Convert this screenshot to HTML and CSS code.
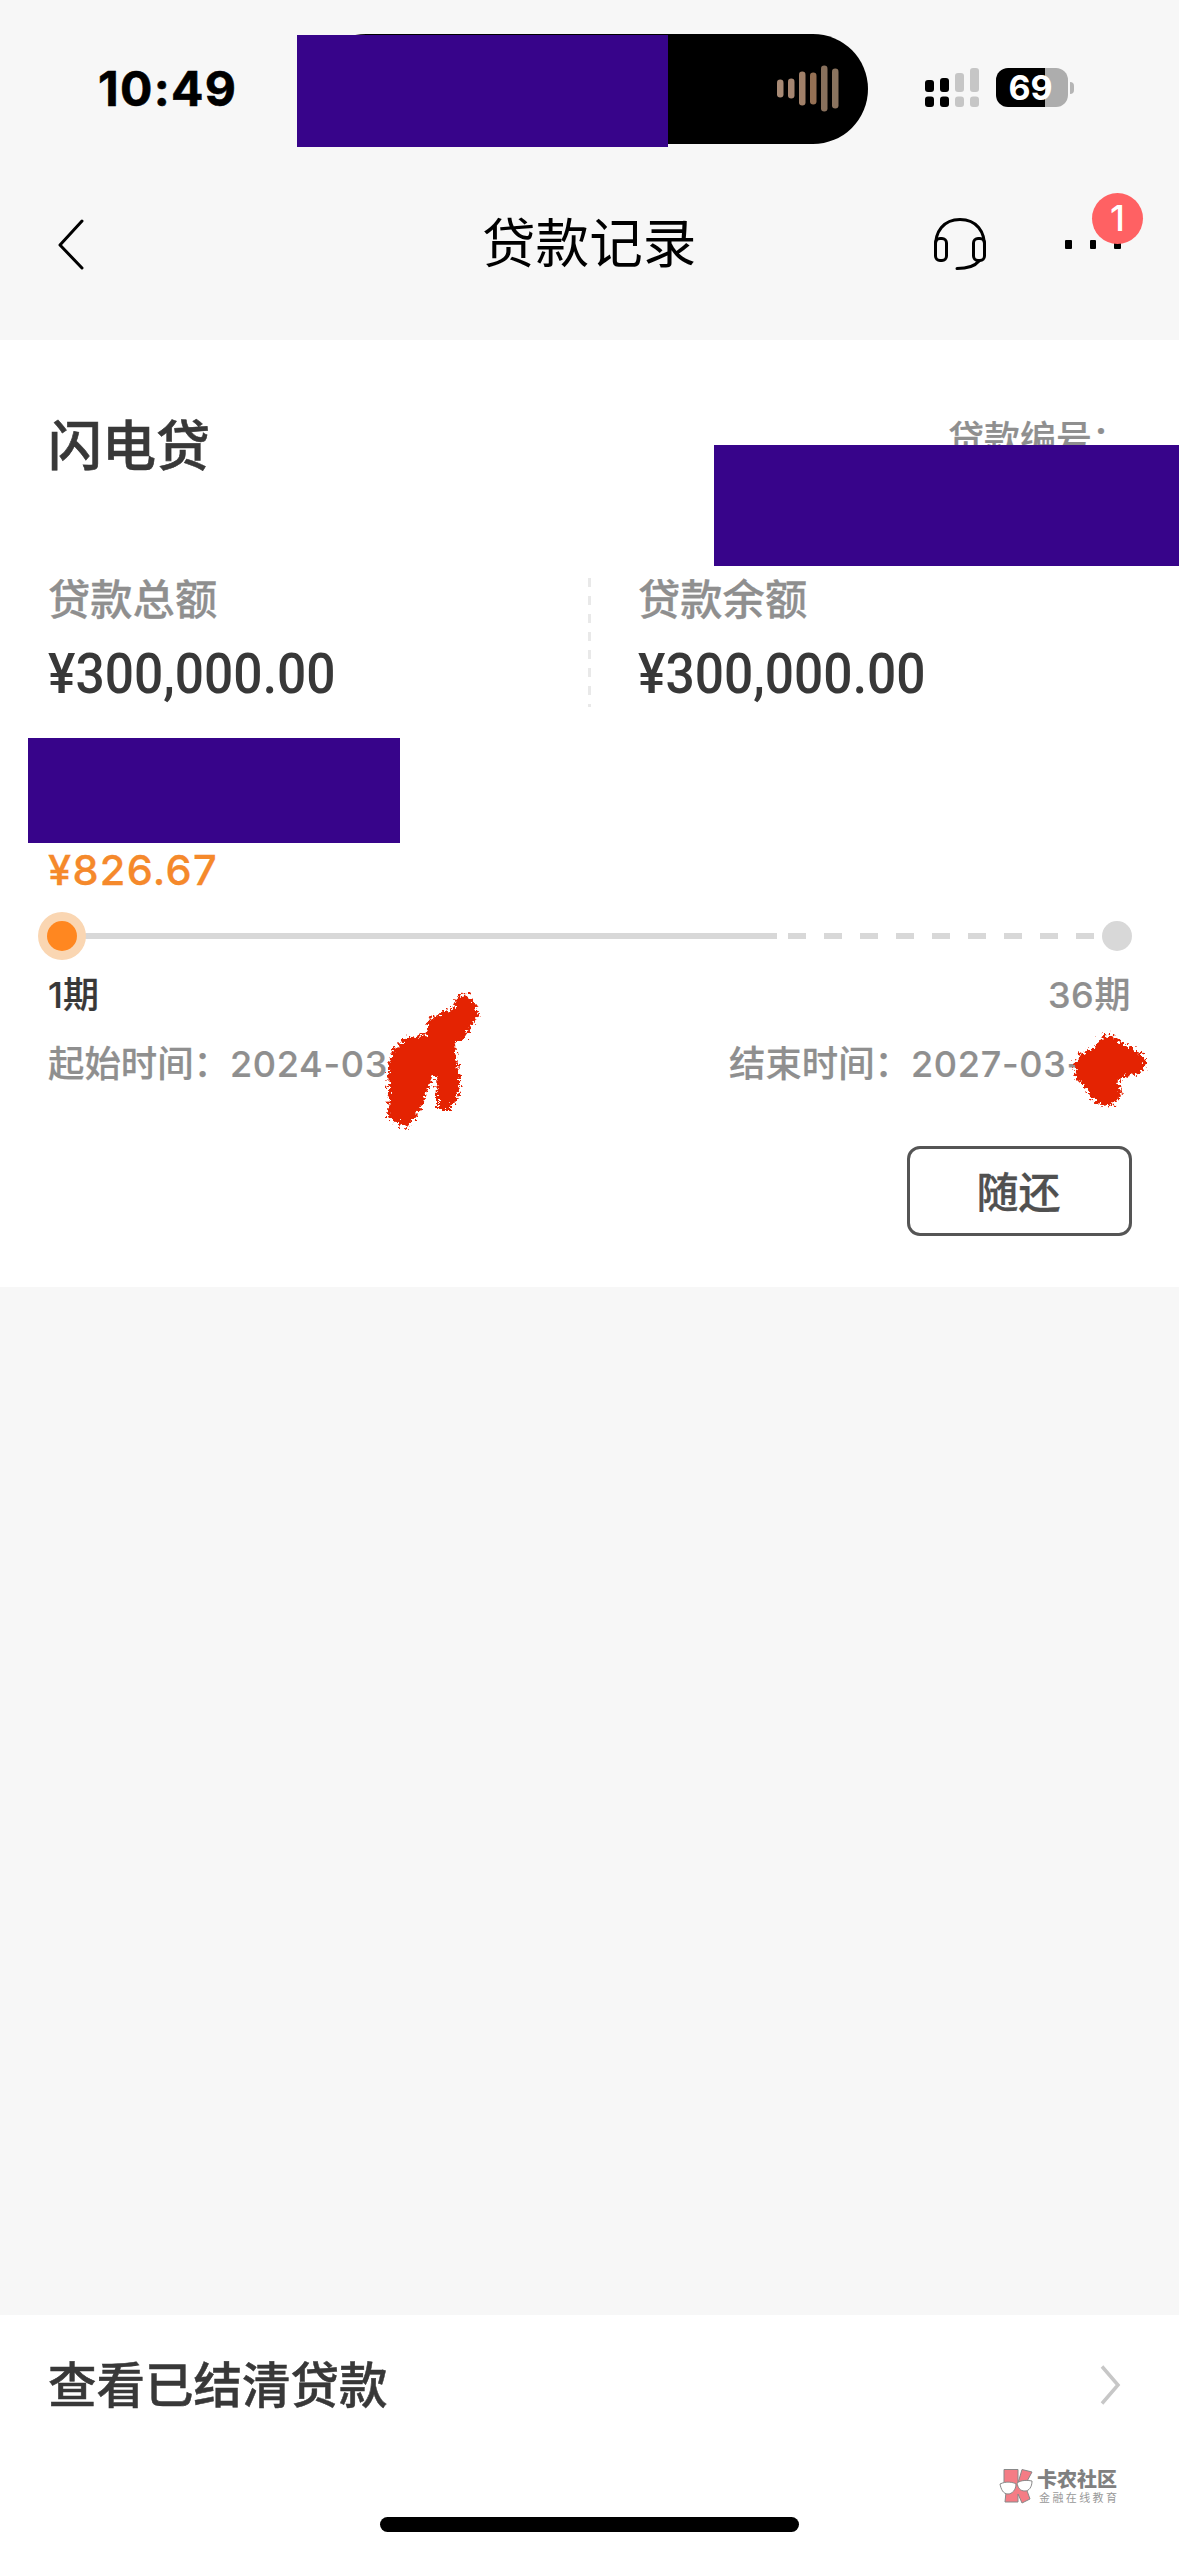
FILE: index.html
```html
<!DOCTYPE html>
<html lang="zh-CN">
<head>
<meta charset="utf-8">
<title>贷款记录</title>
<link rel="stylesheet" href="styles.css">
</head>
<body>
<div class="screen">
  <header class="top">
    <div class="status">
      <span class="clock">10:49</span>
      <div class="island">
        <svg class="wave" width="64" height="48" viewBox="0 0 64 48">
          <rect x="0" y="14.5" width="6.5" height="18" rx="3.2" fill="#a88a75"/>
          <rect x="11" y="13.5" width="6.5" height="20" rx="3.2" fill="#a58570"/>
          <rect x="22" y="6.5" width="6.5" height="34" rx="3.2" fill="#a08069"/>
          <rect x="33" y="7.5" width="6.5" height="32" rx="3.2" fill="#957054"/>
          <rect x="44" y="0.5" width="6.5" height="46" rx="3.2" fill="#88705c"/>
          <rect x="55" y="3.5" width="6.5" height="40" rx="3.2" fill="#8a735e"/>
        </svg>
        <span class="mask mask-island"></span>
      </div>
      <svg class="signal" width="54" height="39" viewBox="0 0 54 39">
        <g fill="#000"><rect y="12" width="9" height="12" rx="3"/><rect x="15" y="10" width="9" height="14" rx="3"/><rect y="28.5" width="9" height="10.5" rx="3"/><rect x="15" y="28.5" width="9" height="10.5" rx="3"/></g>
        <g fill="#c6c6c6"><rect x="30" y="5" width="9" height="19" rx="3"/><rect x="45" width="9" height="24" rx="3"/><rect x="30" y="28.5" width="9" height="10.5" rx="3"/><rect x="45" y="28.5" width="9" height="10.5" rx="3"/></g>
      </svg>
      <div class="battery">69</div>
      <span class="battery-tip"></span>
    </div>
    <nav class="nav">
      <svg class="back" width="30" height="54" viewBox="0 0 30 54"><path d="M27 4 5 28 27 51" fill="none" stroke="#000" stroke-width="3" stroke-linecap="round" stroke-linejoin="round"/></svg>
      <h1 class="title">贷款记录</h1>
      <svg class="headset" width="54" height="54" viewBox="0 0 54 54"><g fill="none" stroke="#000" stroke-width="3" stroke-linecap="round"><path d="M2.500 32C1.500 14 11 2.500 27 2.500S52.500 14 51.500 32"/><rect x="2.500" y="21.500" width="11" height="22" rx="4.500"/><rect x="40.500" y="21.500" width="11" height="22" rx="4.500"/><path d="M46 44C42 49 36 51.500 24 51.500"/></g></svg>
      <div class="more">
        <i></i><i></i><i></i>
        <span class="badge">1</span>
      </div>
    </nav>
  </header>

  <main class="card">
    <div class="card-head">
      <h2 class="product">闪电贷</h2>
      <div class="number">贷款编号：<span class="mask mask-number"></span></div>
    </div>
    <div class="amounts">
      <div class="amount"><span class="label">贷款总额</span><span class="value">¥300,000.00</span></div>
      <div class="divider"></div>
      <div class="amount"><span class="label">贷款余额</span><span class="value">¥300,000.00</span></div>
    </div>
    <div class="mask mask-due"></div>
    <div class="due">¥826.67</div>
    <div class="track">
      <span class="dot dot-now"></span>
      <span class="line"></span>
      <span class="dashes"></span>
      <span class="dot dot-end"></span>
    </div>
    <div class="row terms"><span class="term-now">1期</span><span class="term-end">36期</span></div>
    <div class="row dates">
      <div class="date">起始时间：<span class="num">2024-03</span>
        <svg class="scribble scribble-start" width="110" height="150" viewBox="0 0 110 150">
          <defs><filter id="rough" x="-20%" y="-20%" width="140%" height="140%" color-interpolation-filters="sRGB"><feTurbulence type="fractalNoise" baseFrequency=".3" numOctaves="3" seed="4"/><feDisplacementMap in="SourceGraphic" scale="13" xChannelSelector="R" yChannelSelector="G"/><feGaussianBlur stdDeviation=".7"/></filter></defs>
          <path filter="url(#rough)" fill="#e42302" d="M82 13C88 6 94 10 99 18 106 26 103 36 95 42L91 52C86 56 80 54 80 59L84 86C87 102 84 114 75 124L62 124 62 112 61 90 57 94 52 108 41 132 32 142 21 138 13 132 14 106 13 86C13 72 19 60 32 53L51 49 53 36 66 28 76 25Z"/>
        </svg>
      </div>
      <div class="date date-end">结束时间：<span class="num">2027-03-</span>
        <svg class="scribble scribble-end" width="100" height="90" viewBox="0 0 100 90">
          <path filter="url(#rough)" fill="#e42302" d="M40 14 50 8 61 17 75 24 86 34 84 46 72 50 61 53 58 61 62 69 54 79 43 81 32 74 25 62 16 53 14 41 19 29 34 23Z"/>
        </svg>
      </div>
    </div>
    <div class="actions"><button class="repay">随还</button></div>
  </main>

  <footer class="footer">
    <div class="settled"><span>查看已结清贷款</span>
      <svg width="24" height="46" viewBox="0 0 24 46"><path d="M4 4.500 20 23 4 41.500" fill="none" stroke="#c7c7c7" stroke-width="3.500"/></svg>
    </div>
    <div class="brand">
      <svg width="36" height="36" viewBox="0 0 36 36">
        <g fill="#f47c85" stroke="#888" stroke-width="1"><path d="M6 1.500H20V15L24 1.500 34 4 27 17 32 31 24 35 20 26V34H7L8 24 6 14Z"/></g>
        <g fill="#fff" stroke="#888" stroke-width="1"><path d="M2 16C8 13 15 14 18 16 18 22 14 26 10 26 5 26 3 21 2 16Z"/><path d="M19 15C23 12 29 12 34 13 34 19 31 23 27 23 22 23 20 20 19 15Z"/></g>
      </svg>
      <div class="brand-text"><b>卡农社区</b><small>金融在线教育</small></div>
    </div>
    <div class="home"></div>
  </footer>
</div>
</body>
</html>
```
FILE: styles.css
```css
* { box-sizing: border-box; }
body {
  margin: 0;
  background: #f7f7f7;
  color: #383838;
  font-family: Inter, "Noto Sans CJK SC", sans-serif;
}
.screen {
  display: flex;
  flex-direction: column;
  width: 1179px;
  height: 2556px;
  overflow: hidden;
}
h1, h2 { margin: 0; }
.mask { display: block; background: #37048a; }

.top { height: 340px; }
.status { display: flex; padding-top: 34px; height: 160px; }
.clock {
  width: 311px;
  padding-left: 98px;
  color: #000;
  font-size: 48px;
  font-weight: 700;
  line-height: 109px;
  letter-spacing: 1.3px;
  -webkit-text-stroke: .6px;
}
.island {
  position: relative;
  display: flex;
  align-items: center;
  justify-content: flex-end;
  width: 557px;
  height: 110px;
  padding-right: 27px;
  border-radius: 55px;
  background: #000;
}
.mask-island { position: absolute; left: -14px; top: 1px; width: 371px; height: 112px; }
.signal { margin: 34px 17px 0 57px; }
.battery {
  width: 72px;
  height: 39px;
  margin-top: 34px;
  padding-right: 3px;
  border-radius: 12px;
  background: linear-gradient(90deg, #000 49px, #adadad 49px);
  color: #fff;
  font-size: 34px;
  font-weight: 700;
  line-height: 40px;
  text-align: center;
}
.battery-tip { width: 4px; height: 12px; margin: 48px 0 0 2px; border-radius: 0 6px 6px 0; background: #b5b5b5; }

.nav { display: flex; height: 180px; padding: 57px 0 0 55px; }
.title {
  width: 214px;
  margin-left: 397px;
  color: #000;
  font-size: 53.6px;
  font-weight: 400;
  line-height: 54px;
  white-space: nowrap;
}
.headset { margin: 0 0 0 237px; }
.more { position: relative; display: flex; gap: 18px; margin: 23px 0 0 78px; }
.more i { width: 6.5px; height: 9px; background: #000; border-radius: 1px; }
.badge {
  position: absolute;
  left: 27px;
  top: -47.5px;
  width: 51px;
  height: 51px;
  border-radius: 50%;
  background: #ff6163;
  color: #fff;
  font-size: 36px;
  font-weight: 500;
  line-height: 51px;
  text-align: center;
}

.card { height: 947px; background: #fff; }
.card-head { display: flex; justify-content: space-between; height: 228px; padding: 65px 51px 0 48px; }
.product { font-size: 54px; font-weight: 500; line-height: 83px; -webkit-text-stroke: .6px; }
.number { position: relative; color: #8f8f8f; font-size: 36px; font-weight: 500; line-height: 68px; -webkit-text-stroke: .2px; }
.mask-number { position: absolute; left: -234px; top: 40px; width: 468px; height: 121px; }
.amounts { display: flex; height: 170px; padding-left: 48px; }
.amount { display: flex; flex-direction: column; width: 540px; }
.label { color: #8f8f8f; font-size: 42.3px; font-weight: 500; line-height: 64px; -webkit-text-stroke: .3px; }
.value {
  font-family: Roboto, sans-serif;
  font-size: 55px;
  font-weight: 500;
  line-height: 85px;
  transform: scaleX(.937);
  transform-origin: left;
}
.divider {
  width: 3px;
  height: 129px;
  margin: 10px 47px 0 0;
  background: repeating-linear-gradient(#e9e9e9 0 9px, transparent 9px 18px);
}
.amount:last-child { width: 500px; }
.mask-due { width: 372px; height: 105px; margin-left: 28px; }
.due {
  height: 69px;
  padding-left: 48px;
  color: #f5892b;
  font-size: 41.5px;
  font-weight: 500;
  line-height: 54px;
  letter-spacing: 1.3px;
  -webkit-text-stroke: .3px;
}
.track { display: flex; align-items: center; height: 48px; padding-left: 47px; }
.dot { width: 30px; height: 30px; border-radius: 50%; background: #d8d8d8; }
.dot-now { background: #ff8720; box-shadow: 0 0 0 9px #fad6b2; z-index: 1; }
.line { width: 700px; height: 6px; background: #d8d8d8; }
.dashes { width: 306px; height: 6px; margin: 0 8px 0 11px; background: repeating-linear-gradient(90deg, #d8d8d8 0 18px, transparent 18px 36px); }
.row { display: flex; justify-content: space-between; padding: 0 48px; -webkit-text-stroke: .2px; }
.terms { height: 70px; font-size: 36px; font-weight: 500; line-height: 71px; }
.term-end { letter-spacing: .6px; }
.term-end, .date { color: #8f8f8f; }
.dates { height: 116px; font-size: 36.4px; font-weight: 500; line-height: 69px; }
.date { position: relative; white-space: nowrap; }
.date-end { width: 402px; }
.num { font-size: 36px; letter-spacing: .7px; }
.scribble { position: absolute; }
.scribble-start { left: 327px; top: -45px; }
.scribble-end { left: 331px; top: -5px; }
.actions { display: flex; justify-content: flex-end; padding-right: 47px; }
.repay {
  width: 225px;
  height: 90px;
  padding: 0 2px 3px 0;
  border: 3px solid #555;
  border-radius: 13px;
  background: #fff;
  color: #505050;
  font: 500 42px/78px "Noto Sans CJK SC", sans-serif;
  -webkit-text-stroke: .3px;
}

.footer { height: 241px; margin-top: auto; background: #fff; }
.settled { display: flex; justify-content: space-between; align-items: center; height: 140px; padding: 0 57px 0 48px; font-size: 48.5px; font-weight: 500; -webkit-text-stroke: .5px; }
.settled span { line-height: 70px; padding-top: 1px; }
.brand { display: flex; gap: 3px; height: 62px; padding: 13px 0 0 998px; }
.brand-text { display: flex; flex-direction: column; padding-top: 1px; color: #808080; white-space: nowrap; }
.brand b { font-size: 20px; line-height: 22px; font-weight: 900; }
.brand small { font-size: 11px; line-height: 14px; letter-spacing: 2.4px; padding-left: 2px; color: #999; }
.home { width: 419px; height: 15px; margin: 0 auto; border-radius: 8px; background: #000; }
```
